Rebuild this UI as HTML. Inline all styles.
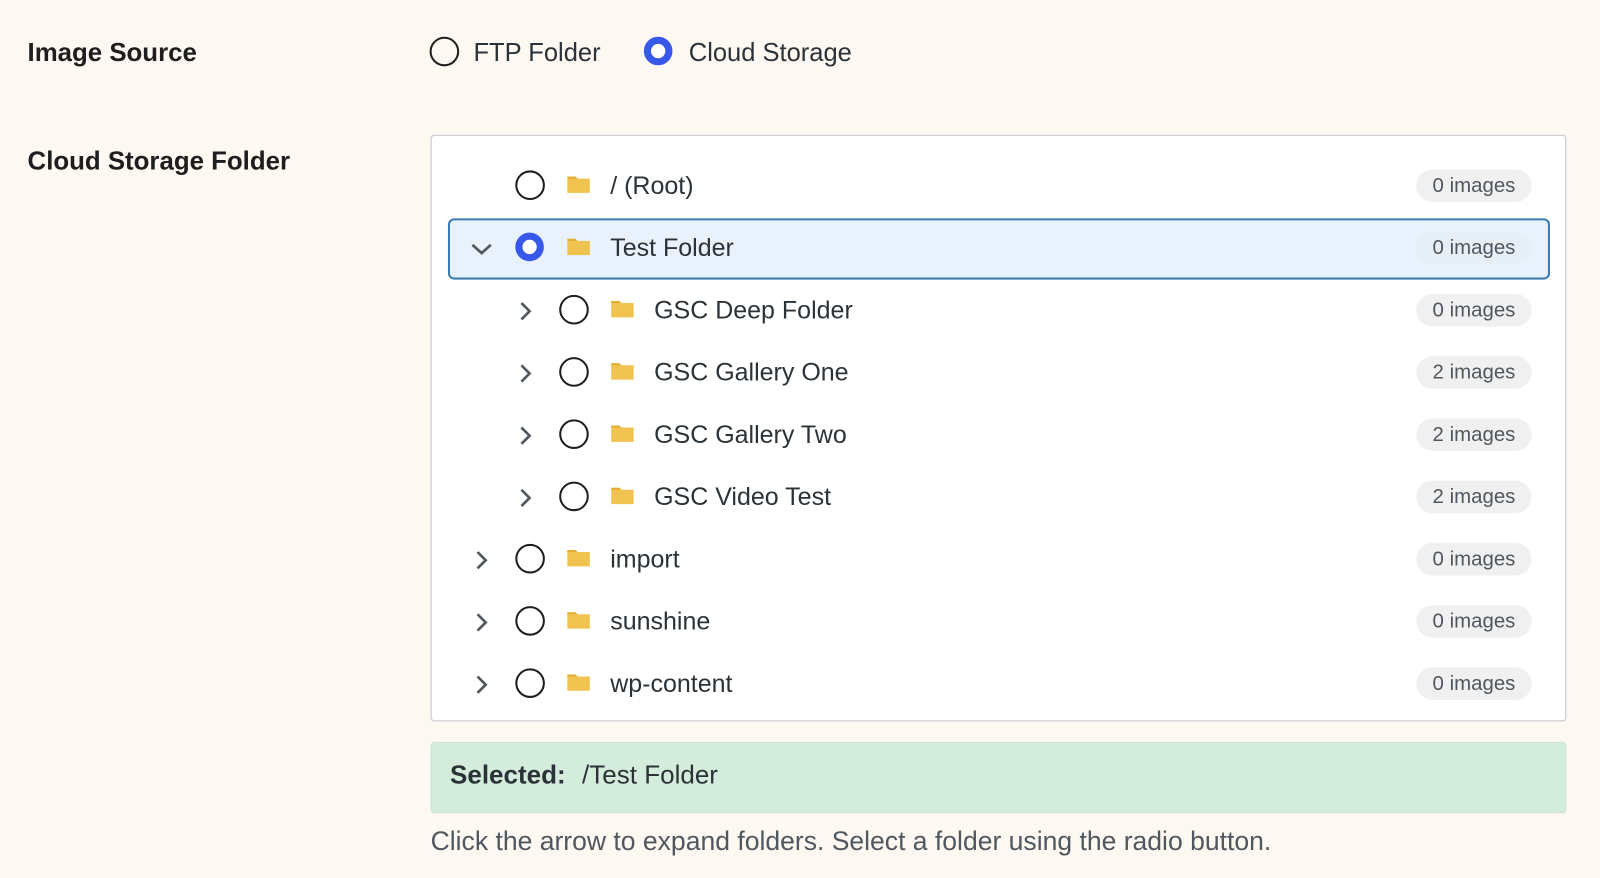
<!DOCTYPE html>
<html><head><style>
body{margin:0;width:1600px;height:878px;background:#fdf8f2;font-family:"Liberation Sans",sans-serif;color:#1e1e1e;overflow:hidden}
#w{position:relative;width:1568px;height:860px;transform:scale(1.0204);transform-origin:0 0}
.a{position:absolute}
.lbl{font-weight:bold;font-size:25.3px;color:#1e1e1e}
.radio{position:absolute;width:25px;height:25px;border:2px solid #1e1e1e;border-radius:50%;box-sizing:content-box}
.radio.on{border:7.5px solid #3858e9;width:14px;height:14px;background:#fff}
.row{position:absolute;left:0;width:1113px;height:61px}
.txt{position:absolute;font-size:24.5px;color:#2c3338;line-height:61px;top:0}
.badge{position:absolute;left:966px;top:14px;width:113px;height:32px;border-radius:16px;background:#f0f0f0;color:#50575e;font-size:20px;text-align:center;line-height:32px}
.fold{position:absolute;top:19px}
.chev{position:absolute;top:20px}
</style></head><body><div id="w">
<div class="a lbl" style="left:27px;top:38px">Image Source</div>
<div class="radio" style="left:421px;top:36px"></div>
<div class="a" style="left:464px;top:38px;font-size:25px;color:#2c3338">FTP Folder</div>
<div class="radio on" style="left:631px;top:36px"></div>
<div class="a" style="left:675px;top:38px;font-size:25px;color:#2c3338">Cloud Storage</div>
<div class="a lbl" style="left:27px;top:144px">Cloud Storage Folder</div>

<div class="a" style="left:422px;top:132px;width:1111px;height:573px;border:1px solid #c3c4c7;border-radius:4px;background:#fff"></div>
<div class="a" style="left:439px;top:214px;width:1076px;height:56px;border:2px solid #3a7bb0;border-radius:6px;background:#e9f2fc"></div>

<svg width="0" height="0" style="position:absolute"><defs>
<symbol id="f" viewBox="0 0 24 20"><path d="M1 2h8l2 2h12v14H1z" fill="#f0c250"/><path d="M1 2h8l2 2H1z" fill="#e3ad33"/></symbol>
</defs></svg>

<div id="rows"></div>
<script>
var rows=[["/ (Root)",0,"0",0,0],["Test Folder",0,"0",2,1],["GSC Deep Folder",1,"0",1,0],["GSC Gallery One",1,"2",1,0],["GSC Gallery Two",1,"2",1,0],["GSC Video Test",1,"2",1,0],["import",0,"0",1,0],["sunshine",0,"0",1,0],["wp-content",0,"0",1,0]];
var h="";
rows.forEach(function(r,i){
 var top=152+i*61, o=r[1]*43;
 h+='<div class="row" style="left:422px;top:'+top+'px">';
 if(r[3]==1)h+='<svg class="chev" style="left:'+(42+o)+'px" width="16" height="22" viewBox="0 0 16 22"><path d="M4 3l8 8-8 8" fill="none" stroke="#50575e" stroke-width="2.6"/></svg>';
 if(r[3]==2)h+='<svg class="chev" style="left:'+(38+o)+'px" width="24" height="22" viewBox="0 0 24 22"><path d="M3 7l9 8 9-8" fill="none" stroke="#50575e" stroke-width="2.6"/></svg>';
 h+='<div class="radio'+(r[4]?' on':'')+'" style="left:'+(83+o)+'px;top:15px"></div>';
 h+='<svg class="fold" style="left:'+(133+o)+'px" width="24" height="20"><use href="#f"/></svg>';
 h+='<div class="txt" style="left:'+(176+o)+'px">'+r[0]+'</div>';
 h+='<div class="badge"'+(r[4]?' style="background:#e6eef6"':'')+'>'+r[2]+' images</div></div>';
});
document.getElementById("rows").innerHTML=h;
</script>

<div class="a" style="left:422px;top:727px;width:1111px;height:68px;border:1px solid #c9e3d0;border-radius:4px;background:#d4ecdb"></div>
<div class="a" style="left:441px;top:746px;font-size:25.5px;color:#2c3338"><b>Selected:</b><span style="margin-left:16px">/Test Folder</span></div>
<div class="a" style="left:422px;top:809px;font-size:26px;color:#50575e">Click the arrow to expand folders. Select a folder using the radio button.</div>
</div></body></html>
